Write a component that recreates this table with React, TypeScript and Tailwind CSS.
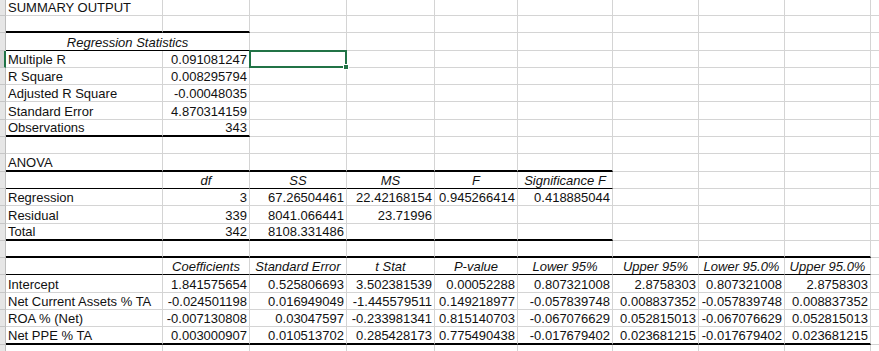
import React from 'react';

type Cell = { v?: string; i?: boolean; c?: boolean; r?: boolean; span?: number };
type Row = { cells: Cell[]; thick?: number; thin?: number; active?: boolean };

// column widths A..I, J fills the rest
const colW = ['w-[157px]', 'w-[87px]', 'w-[97px]', 'w-[88px]', 'w-[83px]', 'w-[95px]', 'w-[86px]', 'w-[86px]', 'w-[86px]'];
const spanW: Record<number, string> = { 2: 'w-[244px]' };

const L = (v: string): Cell => ({ v });
const N = (v: string): Cell => ({ v, r: true });
const H = (v: string): Cell => ({ v, i: true, c: true });
const E: Cell = {};

const nums = (a: string[]) => a.map(N);

const rows: Row[] = [
  { cells: [L('SUMMARY OUTPUT')] },
  { cells: [], thick: 2 },
  { cells: [{ v: 'Regression Statistics', i: true, c: true, span: 2 }], thin: 2 },
  { cells: [L('Multiple R'), N('0.091081247')], active: true },
  { cells: [L('R Square'), N('0.008295794')] },
  { cells: [L('Adjusted R Square'), N('-0.00048035')] },
  { cells: [L('Standard Error'), N('4.870314159')] },
  { cells: [L('Observations'), N('343')], thick: 2 },
  { cells: [] },
  { cells: [L('ANOVA')], thick: 6 },
  { cells: [E, H('df'), H('SS'), H('MS'), H('F'), H('Significance F')], thin: 6 },
  { cells: [L('Regression'), ...nums(['3', '67.26504461', '22.42168154', '0.945266414', '0.418885044'])] },
  { cells: [L('Residual'), ...nums(['339', '8041.066441', '23.71996'])] },
  { cells: [L('Total'), ...nums(['342', '8108.331486'])], thick: 6 },
  { cells: [], thick: 9 },
  {
    cells: [E, H('Coefficients'), H('Standard Error'), H('t Stat'), H('P-value'), H('Lower 95%'), H('Upper 95%'), H('Lower 95.0%'), H('Upper 95.0%')],
    thin: 9,
  },
  { cells: [L('Intercept'), ...nums(['1.841575654', '0.525806693', '3.502381539', '0.00052288', '0.807321008', '2.8758303', '0.807321008', '2.8758303'])] },
  { cells: [L('Net Current Assets % TA'), ...nums(['-0.024501198', '0.016949049', '-1.445579511', '0.149218977', '-0.057839748', '0.008837352', '-0.057839748', '0.008837352'])] },
  { cells: [L('ROA % (Net)'), ...nums(['-0.007130808', '0.03047597', '-0.233981341', '0.815140703', '-0.067076629', '0.052815013', '-0.067076629', '0.052815013'])] },
  { cells: [L('Net PPE % TA'), ...nums(['0.003000907', '0.010513702', '0.285428173', '0.775490438', '-0.017679402', '0.023681215', '-0.017679402', '0.023681215'])], thick: 9 },
  { cells: [] },
];

function SheetRow({ row }: { row: Row }) {
  const out: React.ReactNode[] = [];
  let col = 0;
  let k = 0;
  while (col < 9) {
    const cell = row.cells[k] ?? E;
    const span = cell.span ?? 1;
    const w = span > 1 ? spanW[span] : colW[col];
    const thick = row.thick !== undefined && col < row.thick;
    const thin = row.thin !== undefined && col < row.thin;
    const border = thick ? 'border-b-2 border-b-black' : thin ? 'border-b border-b-black' : 'border-b border-b-[#d4d4d4]';
    const align = cell.c ? 'justify-center' : cell.r ? 'justify-end' : 'justify-start';
    const isActive = row.active && col === 2;
    out.push(
      <div
        key={col}
        className={`${w} shrink-0 h-full flex items-end px-[2px] whitespace-nowrap border-r border-r-[#d4d4d4] ${border} ${align} ${cell.i ? 'italic' : ''} ${isActive ? 'relative' : ''}`}
      >
        {cell.v}
        {isActive && (
          <div className="absolute -left-px -top-px -right-px -bottom-px border-2 border-[#217346]">
            <div className="absolute -right-[4px] -bottom-[4px] w-[6px] h-[6px] bg-[#217346] border border-white" />
          </div>
        )}
      </div>
    );
    col += span;
    k += 1;
  }
  return (
    <div className="flex h-[17.3px]">
      <div
        className={`w-[6px] shrink-0 h-full border-b border-b-[#c6c6c6] ${row.active ? 'bg-[#d2d2d2] border-r-2 border-r-[#217346]' : 'bg-[#e6e6e6] border-r border-r-[#bdbdbd]'}`}
      />
      {out}
      <div className="flex-1 h-full border-b border-b-[#d4d4d4]" />
    </div>
  );
}

export default function App() {
  return (
    <div className="w-[879px] h-[351px] overflow-hidden bg-white text-[#111] text-[13px] leading-[15px] font-['Liberation_Sans',Arial,sans-serif]">
      <div className="mt-[-1.3px]">
        {rows.map((row, i) => (
          <SheetRow key={i} row={row} />
        ))}
      </div>
    </div>
  );
}
